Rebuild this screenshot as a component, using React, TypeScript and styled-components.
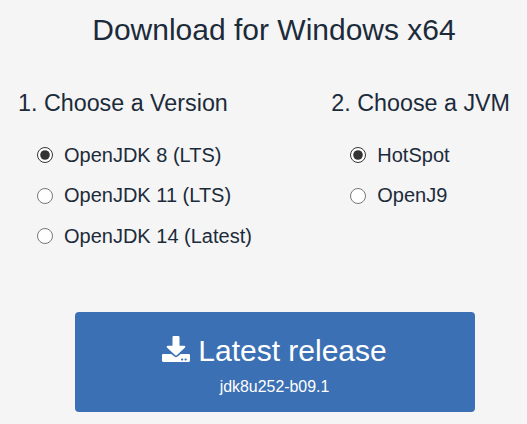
import React from "react";
import styled, { createGlobalStyle } from "styled-components";

const Global = createGlobalStyle`
  html, body { margin: 0; padding: 0; background: #f5f5f5; }
  body { font-family: "Liberation Sans", Arial, sans-serif; color: #1c2b3a; }
`;

const Page = styled.div`
  width: 527px;
  height: 424px;
  overflow: hidden;
  box-sizing: border-box;
  display: flex;
  flex-direction: column;
  align-items: center;
  background: #f5f5f5;
`;

const Title = styled.h1`
  margin: 11px 0 0 21px;
  font-size: 30px;
  line-height: 38px;
  font-weight: 400;
`;

const Columns = styled.div`
  align-self: stretch;
  display: flex;
  justify-content: space-between;
  padding: 0 17px 0 18px;
  margin-top: 39px;
`;

const Column = styled.div`
  display: flex;
  flex-direction: column;
`;

const Heading = styled.h2`
  margin: 0 0 17px;
  font-size: 23.3px;
  line-height: 30px;
  font-weight: 400;
`;

const Option = styled.label`
  display: flex;
  align-items: center;
  gap: 11px;
  height: 40.5px;
  padding-left: 19px;
  font-size: 20px;
`;

const Radio = styled.input`
  width: 16px;
  height: 16px;
  margin: 0;
  accent-color: #333;
`;

const Release = styled.button`
  width: 400px;
  height: 100px;
  margin: 55px 0 0 22px;
  padding: 5px 0 0;
  border: none;
  border-radius: 4px;
  background: #3c70b4;
  color: #fff;
  display: flex;
  flex-direction: column;
  align-items: center;
  justify-content: center;
  font-family: inherit;
`;

const ReleaseTitle = styled.span`
  display: flex;
  align-items: center;
  gap: 8px;
  font-size: 30px;
  line-height: 38px;
`;

const ReleaseSub = styled.span`
  margin-top: 8px;
  font-size: 15.9px;
  line-height: 18px;
`;

const IconSvg = styled.svg`
  width: 28px;
  height: 26px;
  margin-bottom: 4px;
  fill: #fff;
`;

const DownloadIcon = () => (
  <IconSvg viewBox="0 0 512 512" preserveAspectRatio="none">
    <path d="M216 0h80c13.300 0 24 10.700 24 24v168h87.700c17.800 0 26.700 21.500 14.100 34.100L269.700 378.300c-7.500 7.500-19.800 7.500-27.300 0L90.100 226.100c-12.600-12.600-3.700-34.100 14.100-34.100H192V24c0-13.300 10.700-24 24-24zm296 376v112c0 13.300-10.700 24-24 24H24c-13.300 0-24-10.700-24-24V376c0-13.300 10.700-24 24-24h146.700l49 49c20.100 20.100 52.500 20.100 72.600 0l49-49H488c13.300 0 24 10.700 24 24zm-124 88c0-11-9-20-20-20s-20 9-20 20 9 20 20 20 20-9 20-20zm64 0c0-11-9-20-20-20s-20 9-20 20 9 20 20 20 20-9 20-20z" />
  </IconSvg>
);

const versions = ["OpenJDK 8 (LTS)", "OpenJDK 11 (LTS)", "OpenJDK 14 (Latest)"];
const jvms = ["HotSpot", "OpenJ9"];

export default function App() {
  return (
    <Page>
      <Global />
      <Title>Download for Windows x64</Title>
      <Columns>
        <Column>
          <Heading>1. Choose a Version</Heading>
          {versions.map((v, i) => (
            <Option key={v}>
              <Radio type="radio" name="version" defaultChecked={i === 0} />
              {v}
            </Option>
          ))}
        </Column>
        <Column>
          <Heading>2. Choose a JVM</Heading>
          {jvms.map((v, i) => (
            <Option key={v}>
              <Radio type="radio" name="jvm" defaultChecked={i === 0} />
              {v}
            </Option>
          ))}
        </Column>
      </Columns>
      <Release>
        <ReleaseTitle>
          <DownloadIcon />
          Latest release
        </ReleaseTitle>
        <ReleaseSub>jdk8u252-b09.1</ReleaseSub>
      </Release>
    </Page>
  );
}
